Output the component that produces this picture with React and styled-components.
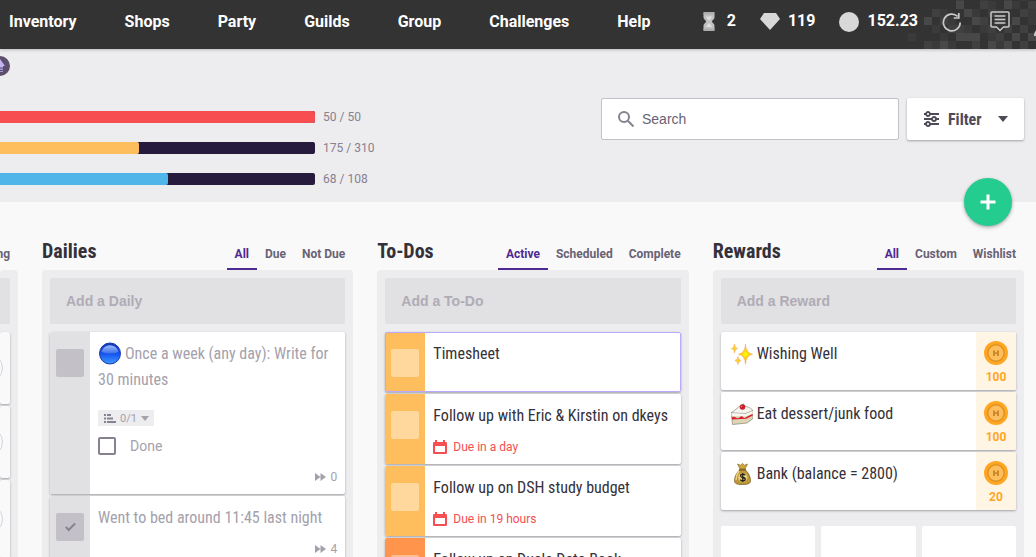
import React from "react";
import styled, { createGlobalStyle, css } from "styled-components";

const condensed = `"Roboto Condensed", "Liberation Sans Narrow", Roboto, sans-serif`;
const field = `"Liberation Sans", Arial, sans-serif`;

const GlobalStyle = createGlobalStyle`
  *, *::before, *::after { box-sizing: border-box; }
  body { margin: 0; background: #f9f9f9; color: #34313a; font-family: Roboto, sans-serif; font-size: 14px; }
  h2, h3, p, ul { margin: 0; padding: 0; }
  ul { list-style: none; }
  button, input { font-family: inherit; }
  svg { display: block; flex: none; }
`;

const Page = styled.div`
  height: 100vh;
  overflow: hidden;
`;

/* ---------- header ---------- */

const Header = styled.header`
  position: relative;
  z-index: 1;
  display: flex;
  align-items: center;
  justify-content: space-between;
  height: 49px;
  padding: 0 0 6px 9px;
  overflow: hidden;
  background: #333;
`;

const HeaderShadow = styled.div`
  position: relative;
  z-index: 1;
  box-shadow: 0 1px 3px rgba(26, 24, 29, 0.24);
`;

const HeaderPattern = styled.svg`
  position: absolute;
  top: 0;
  right: 0;
`;

const Nav = styled.nav`
  display: flex;
  gap: 48px;
`;

const NavLink = styled.a`
  color: #fff;
  font-size: 16px;
  font-weight: 700;
  line-height: 24px;
  text-decoration: none;
`;

const Wallet = styled.div`
  position: relative;
  display: flex;
  align-items: center;
  gap: 24px;
`;

const Currency = styled.span`
  display: flex;
  align-items: center;
  gap: ${(p) => p.$gap || 8}px;
  color: #fff;
  font-size: 16px;
  font-weight: 700;
  line-height: 24px;
`;

const Amount = styled.span`
  padding-bottom: 2px;
`;

const HeaderActions = styled.div`
  display: flex;
  align-items: center;
  gap: 28px;
`;

const IconButton = styled.button`
  display: block;
  padding: 0;
  border: 0;
  background: none;
  color: #c9c9c9;
`;

const CutIcon = styled(IconButton)`
  width: 2px;
  margin-left: -4px;
  padding-top: 8px;
  overflow: hidden;
`;

/* ---------- member summary ---------- */

const Summary = styled.section`
  position: relative;
  display: flex;
  justify-content: space-between;
  align-items: flex-start;
  height: 153px;
  padding-right: 12px;
  background: #edecee;
`;

const Stats = styled.div`
  padding-top: 7px;
`;

const LevelBadge = styled.div`
  display: flex;
  width: 10px;
  justify-content: flex-end;
  margin-bottom: 32px;
  overflow: hidden;
`;

const StatRow = styled.div`
  display: flex;
  align-items: center;
  gap: 8px;
  height: 18px;
  margin-bottom: 13px;
  color: #878190;
  font-size: 12px;
`;

const Track = styled.div`
  width: 315px;
  height: 12px;
  overflow: hidden;
  border-radius: 0 2px 2px 0;
  background: #271b3d;
`;

const Fill = styled.div`
  height: 12px;
  border-radius: 0 2px 2px 0;
  background: ${(p) => p.$color};
`;

const Tools = styled.div`
  display: flex;
  gap: 8px;
  padding-top: 49px;
`;

const SearchBox = styled.label`
  display: flex;
  align-items: center;
  gap: 8px;
  width: 298px;
  height: 42px;
  padding: 0 16px;
  border: 1px solid #c3c0c7;
  border-radius: 2px;
  background: #fff;
`;

const SearchInput = styled.input`
  flex: 1;
  min-width: 0;
  padding: 0;
  border: 0;
  outline: 0;
  background: none;
  && { font-family: ${field}; }
  font-size: 14px;
  &::placeholder { color: #686274; opacity: 1; }
`;

const FilterButton = styled.button`
  display: flex;
  align-items: center;
  gap: 8px;
  width: 117px;
  height: 42px;
  padding: 0 16px;
  border: 0;
  border-radius: 2px;
  background: #fff;
  box-shadow: 0 1px 3px rgba(26, 24, 29, 0.12), 0 1px 2px rgba(26, 24, 29, 0.24);
  color: #4e4a57;
  && { font-family: ${condensed}; }
  font-size: 16px;
  font-weight: 700;
  & > svg:last-child { margin-left: auto; }
`;

const AddTask = styled.button`
  position: absolute;
  right: 24px;
  bottom: -24px;
  display: grid;
  place-items: center;
  width: 48px;
  height: 48px;
  padding: 0;
  border: 0;
  border-radius: 50%;
  background: #24cc8f;
  box-shadow: 0 1px 3px rgba(26, 24, 29, 0.24), 0 2px 4px rgba(26, 24, 29, 0.16);
`;

/* ---------- columns ---------- */

const Board = styled.main`
  display: grid;
  grid-template-columns: 18px repeat(3, minmax(0, 1fr));
  gap: 24px;
  padding: 32px 12px 0 0;
`;

const Column = styled.section`
  display: flex;
  flex-direction: column;
  min-width: 0;
`;

const ColumnHead = styled.div`
  display: flex;
  justify-content: ${(p) => (p.$cut ? "flex-end" : "space-between")};
  height: 36px;
  overflow: hidden;
`;

const ColumnTitle = styled.h2`
  font-family: ${condensed};
  font-size: 20px;
  font-weight: 700;
  line-height: 34px;
`;

const Tabs = styled.div`
  display: flex;
  flex: none;
`;

const Tab = styled.button`
  padding: 6px 8px 0;
  border: 0;
  border-bottom: 2px solid ${(p) => (p.$active ? "#4f2a93" : "transparent")};
  background: none;
  color: ${(p) => (p.$active ? "#4f2a93" : "#686274")};
  font-size: 12px;
  font-weight: 700;
  line-height: 28px;
`;

const TaskArea = styled.div`
  display: flex;
  flex-direction: column;
  height: 340px;
  padding: 8px ${(p) => (p.$cut ? "8px 8px 0" : "8px")};
  overflow: hidden;
  border-radius: 4px 4px 0 0;
  background: #edecee;
`;

const QuickAdd = styled.input`
  width: 100%;
  height: 46px;
  flex: none;
  margin-bottom: 8px;
  padding: 0 16px;
  border: 0;
  border-radius: 2px;
  outline: 0;
  background: #e1e0e3;
  && { font-family: ${field}; }
  font-size: 14px;
  font-weight: 700;
  &::placeholder { color: #b0acb6; opacity: 1; }
`;

const CutQuickAdd = styled.div`
  height: 46px;
  flex: none;
  margin-bottom: 8px;
  border-radius: 0 2px 2px 0;
  background: #e1e0e3;
`;

const TaskList = styled.ul`
  display: flex;
  flex: none;
  flex-direction: column;
  gap: 2px;
`;

const Card = styled.li`
  display: flex;
  flex: none;
  min-height: ${(p) => p.$min || 60}px;
  border-radius: 2px;
  background: #fff;
  box-shadow: 0 1px 3px rgba(26, 24, 29, 0.12), 0 1px 2px rgba(26, 24, 29, 0.24);
  ${(p) => p.$selected && css`
    outline: 1px solid #bda8ff;
    outline-offset: -1px;
  `}
`;

const HabitCard = styled(Card)`
  align-items: center;
  justify-content: flex-end;
  padding-right: 7px;
  overflow: hidden;
  background: #f9f9f9;
`;

const HabitRing = styled.span`
  flex: none;
  width: 30px;
  height: 30px;
  border: 1px solid #d5d3d8;
  border-radius: 50%;
`;

const Strip = styled.div`
  display: flex;
  flex: none;
  justify-content: center;
  width: 40px;
  padding-top: 17px;
  border-radius: 2px 0 0 2px;
  background: ${(p) => p.$color};
`;

const TaskCheck = styled.input`
  position: relative;
  appearance: none;
  width: 28px;
  height: 28px;
  margin: 0;
  border-radius: 2px;
  background: ${(p) => p.$color};
  &:checked::after {
    content: "";
    position: absolute;
    left: 12px;
    top: 8px;
    width: 5px;
    height: 10px;
    border: solid #878190;
    border-width: 0 2px 2px 0;
    transform: rotate(45deg);
  }
`;

const CardBody = styled.div`
  flex: 1;
  min-width: 0;
  padding: 9px 8px 8px;
  color: ${(p) => (p.$muted ? "#a5a1ac" : "#34313a")};
`;

const TaskTitle = styled.h3`
  font-family: ${condensed};
  font-size: 16px;
  font-weight: 400;
  line-height: 26px;
`;

const InlineEmoji = styled.svg`
  display: inline-block;
  vertical-align: -6px;
  margin-right: 4px;
`;

const Due = styled.p`
  display: flex;
  align-items: center;
  gap: 6px;
  margin-top: 9px;
  color: #f74e52;
  font-size: 12px;
  line-height: 18px;
`;

const ChecklistToggle = styled.button`
  display: flex;
  align-items: center;
  gap: 4px;
  height: 16px;
  margin-top: 17px;
  padding: 0 5px 0 6px;
  border: 0;
  background: #edecee;
  color: #a5a1ac;
  font-size: 11px;
`;

const ChecklistItem = styled.label`
  display: flex;
  align-items: center;
  gap: 14px;
  margin: 11px 0 14px;
  line-height: 18px;
`;

const SmallCheck = styled.input`
  appearance: none;
  width: 18px;
  height: 18px;
  margin: 0;
  border: 2px solid #878190;
  border-radius: 2px;
`;

const Streak = styled.p`
  display: flex;
  align-items: center;
  justify-content: flex-end;
  gap: 5px;
  margin-top: 10px;
  font-size: 12px;
  line-height: 16px;
`;

const RewardBody = styled(CardBody)`
  padding-left: 10px;
`;

const PriceButton = styled.button`
  display: flex;
  flex: none;
  flex-direction: column;
  align-items: center;
  gap: 4px;
  width: 40px;
  padding: 9px 0 0;
  border: 0;
  border-radius: 0 2px 2px 0;
  background: #fff5e5;
  color: #ffa623;
  font-size: 12px;
  font-weight: 700;
  line-height: 16px;
`;

const ItemGrid = styled.ul`
  display: grid;
  grid-template-columns: repeat(3, 1fr);
  gap: 6px;
  margin-top: 16px;
`;

const Item = styled.li`
  height: 120px;
  border-radius: 2px;
  background: #fff;
`;

/* ---------- drawings ---------- */

const cells = [
  [6, 0, 1], [9, 0, 0], [12, 0, 1], [14, 0, 0],
  [6, 1, 2], [9, 1, 1], [10, 1, 0], [12, 1, 2], [13, 1, 0], [15, 1, 1],
  [3, 2, 1], [4, 2, 0], [7, 2, 2], [8, 2, 0], [10, 2, 1], [11, 2, 0], [14, 2, 1], [15, 2, 0],
  [2, 3, 2], [4, 3, 1], [5, 3, 0], [8, 3, 2], [9, 3, 1], [11, 3, 1], [13, 3, 2], [15, 3, 0],
  [3, 4, 0], [5, 4, 1], [6, 4, 1], [7, 4, 0], [9, 4, 0], [10, 4, 1], [12, 4, 1], [14, 4, 1],
  [0, 5, 0], [4, 5, 0], [6, 5, 2], [7, 5, 2], [8, 5, 2], [10, 5, 0], [11, 5, 1], [13, 5, 2], [15, 5, 2],
  [2, 6, 1], [3, 6, 0], [4, 6, 2], [5, 6, 0], [8, 6, 1], [10, 6, 2], [11, 6, 0], [12, 6, 2], [14, 6, 1],
];
const tones = ["#3a3a3a", "#404040", "#484848"];

const Pattern = () => (
  <HeaderPattern width="128" height="49" aria-hidden="true">
    {cells.map(([c, r, t]) => (
      <rect key={`${c}-${r}`} x={c * 8} y={r * 8 - 7} width="8" height="8" fill={tones[t]} />
    ))}
  </HeaderPattern>
);

const Hourglass = () => (
  <svg width="12" height="19" viewBox="0 0 12 19">
    <path d="M.5 1h11v4.500c0 2-2.500 2.500-2.500 4s2.500 2 2.500 4V18H.5v-4.500c0-2 2.500-2.500 2.500-4S.5 7.500.5 5.500z" fill="#c0c0c0" />
    <path d="M.5 0h11v2.500H.5zM.5 16.500h11V19H.5z" fill="#adadad" />
    <path d="M3 4.500h6L7 8H5zM3 15l2-3.500h2L9 15z" fill="#dedede" />
  </svg>
);

const Gem = () => (
  <svg width="20" height="17" viewBox="0 0 20 17">
    <path d="M4 0h12l4 6-10 11L0 6z" fill="#d8d8d8" />
  </svg>
);

const Gold = () => (
  <svg width="20" height="20" viewBox="0 0 20 20"><circle cx="10" cy="10" r="10" fill="#d8d8d8" /></svg>
);

const Refresh = () => (
  <svg width="20" height="20" viewBox="0 0 20 20" fill="none" stroke="currentColor" strokeWidth="1.700">
    <path d="M18.200 10.500A8.400 8.400 0 1 1 15.600 4.400" />
    <path d="M16.800 1v5h-5" />
  </svg>
);

const Message = () => (
  <svg width="20" height="21" viewBox="0 0 20 21" fill="none" stroke="currentColor" strokeWidth="1.500">
    <path d="M2 1h16q1 0 1 1v13q0 1-1 1h-4.500L10 19.500 6.500 16H2q-1 0-1-1V2q0-1 1-1z" />
    <path d="M4.500 5h11M4.500 8.500h11M4.500 12h11" />
  </svg>
);

const User = () => (
  <svg width="20" height="20" viewBox="0 0 20 20" fill="#c9c9c9"><circle cx="10" cy="6" r="5" /><path d="M0 20c0-12 20-12 20 0z" /></svg>
);

const Level = () => (
  <svg width="20" height="20" viewBox="0 0 20 20">
    <circle cx="10" cy="10" r="10" fill="#5b4f6c" />
    <path d="M10 3l5 7h-2v1.500H7V10H5z" fill="#c4b3f5" />
    <path d="M7 12.500h6V14H7zM7 15h6v1H7z" fill="#a997db" />
  </svg>
);

const SearchIcon = () => (
  <svg width="16" height="16" viewBox="0 0 16 16" fill="none" stroke="#878190" strokeWidth="2">
    <circle cx="6" cy="6" r="5" /><path d="M9.500 9.500l6 6" />
  </svg>
);

const FilterIcon = () => (
  <svg width="17" height="16" viewBox="0 0 17 16" fill="none" stroke="#4e4a57" strokeWidth="1.800">
    <path d="M1 3h2M7 3h9M1 8h8M13 8h3M1 13h2M7 13h9" />
    <circle cx="5" cy="3" r="2" /><circle cx="11" cy="8" r="2" /><circle cx="5" cy="13" r="2" />
  </svg>
);

const Caret = ({ size = 10, color = "#4e4a57" }) => (
  <svg width={size} height={size / 2 + 1} viewBox="0 0 10 6"><path d="M0 0h10L5 6z" fill={color} /></svg>
);

const Plus = () => (
  <svg width="16" height="16" viewBox="0 0 16 16"><path d="M6.500 0.500h3v6h6v3h-6v6h-3v-6h-6v-3h6z" fill="#fff" /></svg>
);

const Calendar = () => (
  <svg width="14" height="14" viewBox="0 0 14 14">
    <path d="M2 0h2v2h6V0h2v2h1q1 0 1 1v10q0 1-1 1H1q-1 0-1-1V3q0-1 1-1h1zM2 6v6h10V6z" fill="#f74e52" fillRule="evenodd" />
  </svg>
);

const ListIcon = () => (
  <svg width="12" height="9" viewBox="0 0 12 9" fill="#878190">
    <path d="M0 0h2v2H0zM3 0h4v2H3zM0 3.500h2v2H0zM3 3.500h6v2H3zM0 7h2v2H0zM3 7h9v2H3z" />
  </svg>
);

const Forward = () => (
  <svg width="11" height="8" viewBox="0 0 11 8" fill="#a5a1ac"><path d="M0 0l5.500 4L0 8zM5.500 0L11 4l-5.500 4z" /></svg>
);

const Coin = () => (
  <svg width="24" height="24" viewBox="0 0 24 24">
    <circle cx="12" cy="12" r="12" fill="#ffa623" />
    <circle cx="12" cy="12" r="9" fill="#e09320" />
    <circle cx="12" cy="12" r="7.500" fill="#ffbe5d" />
    <path d="M9 9.500h2v1.700h2V9.500h2v5.500h-2v-2h-2v2H9z" fill="#cb8a2c" />
  </svg>
);

const BlueCircle = () => (
  <InlineEmoji width="23" height="23" viewBox="0 0 23 23">
    <defs>
      <linearGradient id="orb" x1="0" y1="0" x2="0" y2="1">
        <stop offset="0" stopColor="#1238b8" /><stop offset=".5" stopColor="#1552ee" /><stop offset="1" stopColor="#3d9bff" />
      </linearGradient>
      <linearGradient id="orbShine" x1="0" y1="0" x2="0" y2="1">
        <stop offset="0" stopColor="#9dbcf8" /><stop offset="1" stopColor="#3c70ea" />
      </linearGradient>
    </defs>
    <circle cx="12" cy="11.500" r="10.500" fill="url(#orb)" stroke="#1a36a8" />
    <path d="M3.500 10a8.700 8.700 0 0 1 17 0q-8.500 3-17 0z" fill="url(#orbShine)" />
  </InlineEmoji>
);

const Sparkles = () => (
  <InlineEmoji width="22" height="22" viewBox="0 0 22 22">
    <g fill="#ffd21f" stroke="#ee9a4a" strokeWidth=".5">
      <path d="M14.500 1q.300 9 7 10.300-6.700 1.300-7 10-.300-8.700-7-10 6.700-1.300 7-10.300z" />
      <path d="M3.500 1q.200 4 3 4.500-2.800.500-3 4.500-.200-4-3-4.500 2.800-.500 3-4.500z" />
      <path d="M7 13.500q.200 3.500 3 4-2.800.500-3 4-.200-3.500-3-4 2.800-.500 3-4z" />
    </g>
    <circle cx="14.500" cy="11.300" r="2.300" fill="#fff200" />
  </InlineEmoji>
);

const Cake = () => (
  <InlineEmoji width="22" height="22" viewBox="0 0 22 22">
    <path d="M0 10L9 3q9-.5 13 4.500l-7 3z" fill="#f6f5ef" stroke="#8f8c80" strokeWidth=".7" />
    <path d="M.3 10l14.700 1 7-3.500v8l-6 4.500-14.500 1.500z" fill="#ddd5b5" stroke="#8a8570" strokeWidth=".7" />
    <path d="M.5 10l14.500.8 6.700-3v2.700L15 13.500.700 13z" fill="#f8f6ee" />
    <path d="M.700 14.500q2-1.500 4 0t4-.300 3.500 0 3-.300l6.300-2.900v1.700l-6.300 3-14.200.700z" fill="#d92231" />
    <circle cx="11.500" cy="4" r="2.800" fill="#c81f2c" /><path d="M10 1.500l2.500-1 1 1.500z" fill="#6d8c2f" />
    <circle cx="10.500" cy="3.500" r=".8" fill="#ff8a8a" />
  </InlineEmoji>
);

const MoneyBag = () => (
  <InlineEmoji width="22" height="22" viewBox="0 0 22 22">
    <path d="M6.500 1l3 1.200L11.500.500l2 1.700 3-1.200-2.500 5h-5z" fill="#cda63c" stroke="#806221" strokeWidth=".6" />
    <path d="M8.500 7h6c3 3 5 7 5 10.500 0 3-2 4-8 4s-8-1-8-4C3.500 14 5.500 10 8.500 7z" fill="#bf9838" stroke="#705719" strokeWidth=".7" />
    <path d="M8 8c-2 3-3 6-3 9" stroke="#ecd07c" strokeWidth="1.500" fill="none" />
    <path d="M8 5.700h7v1.800H8z" fill="#8a6921" />
    <circle cx="11.800" cy="14.500" r="4.600" fill="#e7cd78" />
    <path d="M14.200 12.200q-.800-1-2.400-1-2.200 0-2.200 1.600 0 1.400 2.200 1.700 2.400.300 2.400 1.800 0 1.600-2.400 1.600-1.800 0-2.500-1.200M11.800 10v9" fill="none" stroke="#272217" strokeWidth="1.300" />
  </InlineEmoji>
);

/* ---------- data ---------- */

const navItems = ["Inventory", "Shops", "Party", "Guilds", "Group", "Challenges", "Help"];

const stats = [
  { label: "50 / 50", fill: 100, color: "#f74e52" },
  { label: "175 / 310", fill: 44.1, color: "#ffbe5d" },
  { label: "68 / 108", fill: 53.3, color: "#50b5e9" },
];

const todos = [
  { title: "Timesheet", color: "#ffbe5d", selected: true },
  { title: "Follow up with Eric & Kirstin on dkeys", color: "#ffbe5d", due: "Due in a day" },
  { title: "Follow up on DSH study budget", color: "#ffbe5d", due: "Due in 19 hours" },
  { title: "Follow up on Duals Data Book", color: "#ff944c" },
];

const rewards = [
  { title: "Wishing Well", price: 100, Icon: Sparkles },
  { title: "Eat dessert/junk food", price: 100, Icon: Cake },
  { title: "Bank (balance = 2800)", price: 20, Icon: MoneyBag },
];

const TaskColumn = ({ title, tabs, add, children }) => (
  <Column>
    <ColumnHead>
      <ColumnTitle>{title}</ColumnTitle>
      <Tabs>
        {tabs.map((t, i) => <Tab key={t} $active={i === 0}>{t}</Tab>)}
      </Tabs>
    </ColumnHead>
    <TaskArea>
      <QuickAdd placeholder={add} aria-label={add} />
      {children}
    </TaskArea>
  </Column>
);

export default function App() {
  return (
    <Page>
      <GlobalStyle />
      <HeaderShadow>
        <Header>
          <Pattern />
          <Nav>
            {navItems.map((n) => <NavLink href="#" key={n}>{n}</NavLink>)}
          </Nav>
          <Wallet>
            <Currency $gap={12}><Hourglass /><Amount>2</Amount></Currency>
            <Currency><Gem /><Amount>119</Amount></Currency>
            <Currency><Gold /><Amount>152.23</Amount></Currency>
            <HeaderActions>
              <IconButton aria-label="Sync"><Refresh /></IconButton>
              <IconButton aria-label="Messages"><Message /></IconButton>
              <CutIcon aria-label="User"><User /></CutIcon>
            </HeaderActions>
          </Wallet>
        </Header>
      </HeaderShadow>

      <Summary>
        <Stats>
          <LevelBadge><Level /></LevelBadge>
          {stats.map((s) => (
            <StatRow key={s.label}>
              <Track><Fill $color={s.color} style={{ width: `${s.fill}%` }} /></Track>
              {s.label}
            </StatRow>
          ))}
        </Stats>
        <Tools>
          <SearchBox>
            <SearchIcon />
            <SearchInput placeholder="Search" aria-label="Search" />
          </SearchBox>
          <FilterButton><FilterIcon />Filter<Caret /></FilterButton>
        </Tools>
        <AddTask aria-label="Add task"><Plus /></AddTask>
      </Summary>

      <Board>
        <Column>
          <ColumnHead $cut><Tabs><Tab>Strong</Tab></Tabs></ColumnHead>
          <TaskArea $cut>
            <CutQuickAdd />
            <TaskList>
              <HabitCard $min={72}><HabitRing /></HabitCard>
              <HabitCard $min={72}><HabitRing /></HabitCard>
              <HabitCard $min={78}><HabitRing /></HabitCard>
            </TaskList>
          </TaskArea>
        </Column>

        <TaskColumn title="Dailies" tabs={["All", "Due", "Not Due"]} add="Add a Daily">
          <TaskList>
            <Card $min={162}>
              <Strip $color="#e1e0e3">
                <TaskCheck type="checkbox" $color="#c3c0c7" aria-label="Once a week (any day): Write for 30 minutes" />
              </Strip>
              <CardBody $muted>
                <TaskTitle><BlueCircle />Once a week (any day): Write for 30 minutes</TaskTitle>
                <ChecklistToggle><ListIcon />0/1<Caret size={8} color="#a5a1ac" /></ChecklistToggle>
                <ChecklistItem><SmallCheck type="checkbox" />Done</ChecklistItem>
                <Streak><Forward />0</Streak>
              </CardBody>
            </Card>
            <Card>
              <Strip $color="#e1e0e3">
                <TaskCheck type="checkbox" defaultChecked $color="#c3c0c7" aria-label="Went to bed around 11:45 last night" />
              </Strip>
              <CardBody $muted>
                <TaskTitle>Went to bed around 11:45 last night</TaskTitle>
                <Streak><Forward />4</Streak>
              </CardBody>
            </Card>
          </TaskList>
        </TaskColumn>

        <TaskColumn title="To-Dos" tabs={["Active", "Scheduled", "Complete"]} add="Add a To-Do">
          <TaskList>
            {todos.map((t) => (
              <Card key={t.title} $selected={t.selected}>
                <Strip $color={t.color}>
                  <TaskCheck type="checkbox" $color="rgba(255, 255, 255, 0.4)" aria-label={t.title} />
                </Strip>
                <CardBody>
                  <TaskTitle>{t.title}</TaskTitle>
                  {t.due && <Due><Calendar />{t.due}</Due>}
                </CardBody>
              </Card>
            ))}
          </TaskList>
        </TaskColumn>

        <TaskColumn title="Rewards" tabs={["All", "Custom", "Wishlist"]} add="Add a Reward">
          <TaskList>
            {rewards.map(({ title, price, Icon }) => (
              <Card key={title} $min={58}>
                <RewardBody><TaskTitle><Icon />{title}</TaskTitle></RewardBody>
                <PriceButton aria-label={`Buy ${title} for ${price} gold`}><Coin />{price}</PriceButton>
              </Card>
            ))}
          </TaskList>
          <ItemGrid><Item /><Item /><Item /></ItemGrid>
        </TaskColumn>
      </Board>
    </Page>
  );
}
